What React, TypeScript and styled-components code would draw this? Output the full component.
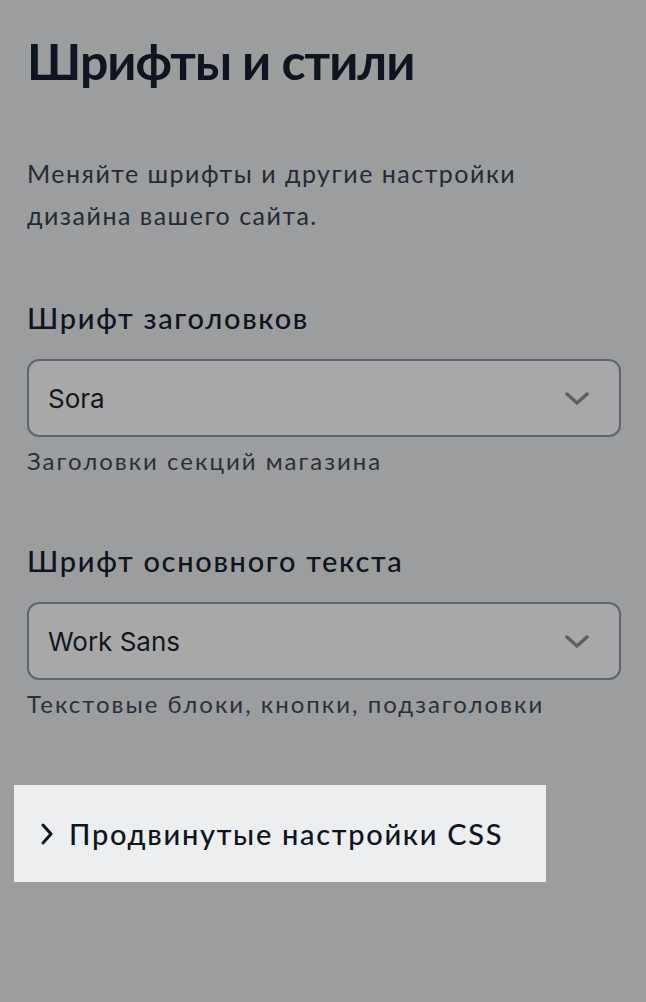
import React from 'react'
import styled, { createGlobalStyle } from 'styled-components'

const GlobalStyle = createGlobalStyle`
  html, body {
    margin: 0;
    padding: 0;
    background: #9c9d9f;
  }
  body {
    font-family: Lato, "Noto Sans", sans-serif;
    -webkit-font-smoothing: antialiased;
  }
`

const Page = styled.div`
  min-height: 1002px;
  box-sizing: border-box;
  padding: 31px 25px 0 27px;
  background: #9c9d9f;
`

const Title = styled.h1`
  margin: 0;
  font-size: 50px;
  line-height: 60px;
  font-weight: 700;
  letter-spacing: -1px;
  color: #0e1420;
`

const Description = styled.p`
  margin: 61px 0 0;
  font-size: 25px;
  line-height: 42px;
  letter-spacing: 1.5px;
  color: #252b34;
`

const Field = styled.div`
  display: flex;
  flex-direction: column;
  margin-top: 62px;
`

const Label = styled.label`
  font-size: 29px;
  line-height: 40px;
  font-weight: 500;
  letter-spacing: 1.7px;
  color: #0e1420;
`

const SelectBox = styled.div`
  margin-top: 21px;
  height: 78px;
  box-sizing: border-box;
  display: flex;
  align-items: center;
  justify-content: space-between;
  padding: 0 30px 0 19px;
  border: 2px solid #5d6570;
  border-radius: 12px;
  background: #a8a8a9;
`

const SelectValue = styled.span`
  font-family: Inter, "Noto Sans", sans-serif;
  font-size: 26px;
  color: #111722;
`

const Helper = styled.span`
  margin-top: 6px;
  font-size: 24px;
  line-height: 36px;
  letter-spacing: 2px;
  color: #2a3039;
`

const Advanced = styled.button`
  margin: 63px 0 0 -13px;
  width: 532px;
  height: 97px;
  display: flex;
  align-items: center;
  gap: 16px;
  padding: 0 0 0 27px;
  border: none;
  background: #edeef0;
  font-family: Lato, "Noto Sans", sans-serif;
  font-size: 29px;
  font-weight: 500;
  letter-spacing: 1.7px;
  color: #0e1420;
  cursor: pointer;
`

const ChevronDown = () => (
  <svg width="24" height="13" viewBox="0 0 24 13" fill="none">
    <polyline points="2,2 12,11 22,2" stroke="#59616b" strokeWidth="3.5" strokeLinecap="round" strokeLinejoin="round" />
  </svg>
)

const ChevronRight = () => (
  <svg width="12" height="22" viewBox="0 0 12 22" fill="none">
    <polyline points="2,2 10,11 2,20" stroke="#0e1420" strokeWidth="3" strokeLinecap="round" strokeLinejoin="round" />
  </svg>
)

const fields = [
  { label: 'Шрифт заголовков', value: 'Sora', helper: 'Заголовки секций магазина' },
  { label: 'Шрифт основного текста', value: 'Work Sans', helper: 'Текстовые блоки, кнопки, подзаголовки' },
]

export default function App() {
  return (
    <>
      <GlobalStyle />
      <Page>
        <Title>Шрифты и стили</Title>
        <Description>
          Меняйте шрифты и другие настройки
          <br />
          дизайна вашего сайта.
        </Description>
        {fields.map((f) => (
          <Field key={f.label}>
            <Label>{f.label}</Label>
            <SelectBox>
              <SelectValue>{f.value}</SelectValue>
              <ChevronDown />
            </SelectBox>
            <Helper>{f.helper}</Helper>
          </Field>
        ))}
        <Advanced>
          <ChevronRight />
          Продвинутые настройки CSS
        </Advanced>
      </Page>
    </>
  )
}
